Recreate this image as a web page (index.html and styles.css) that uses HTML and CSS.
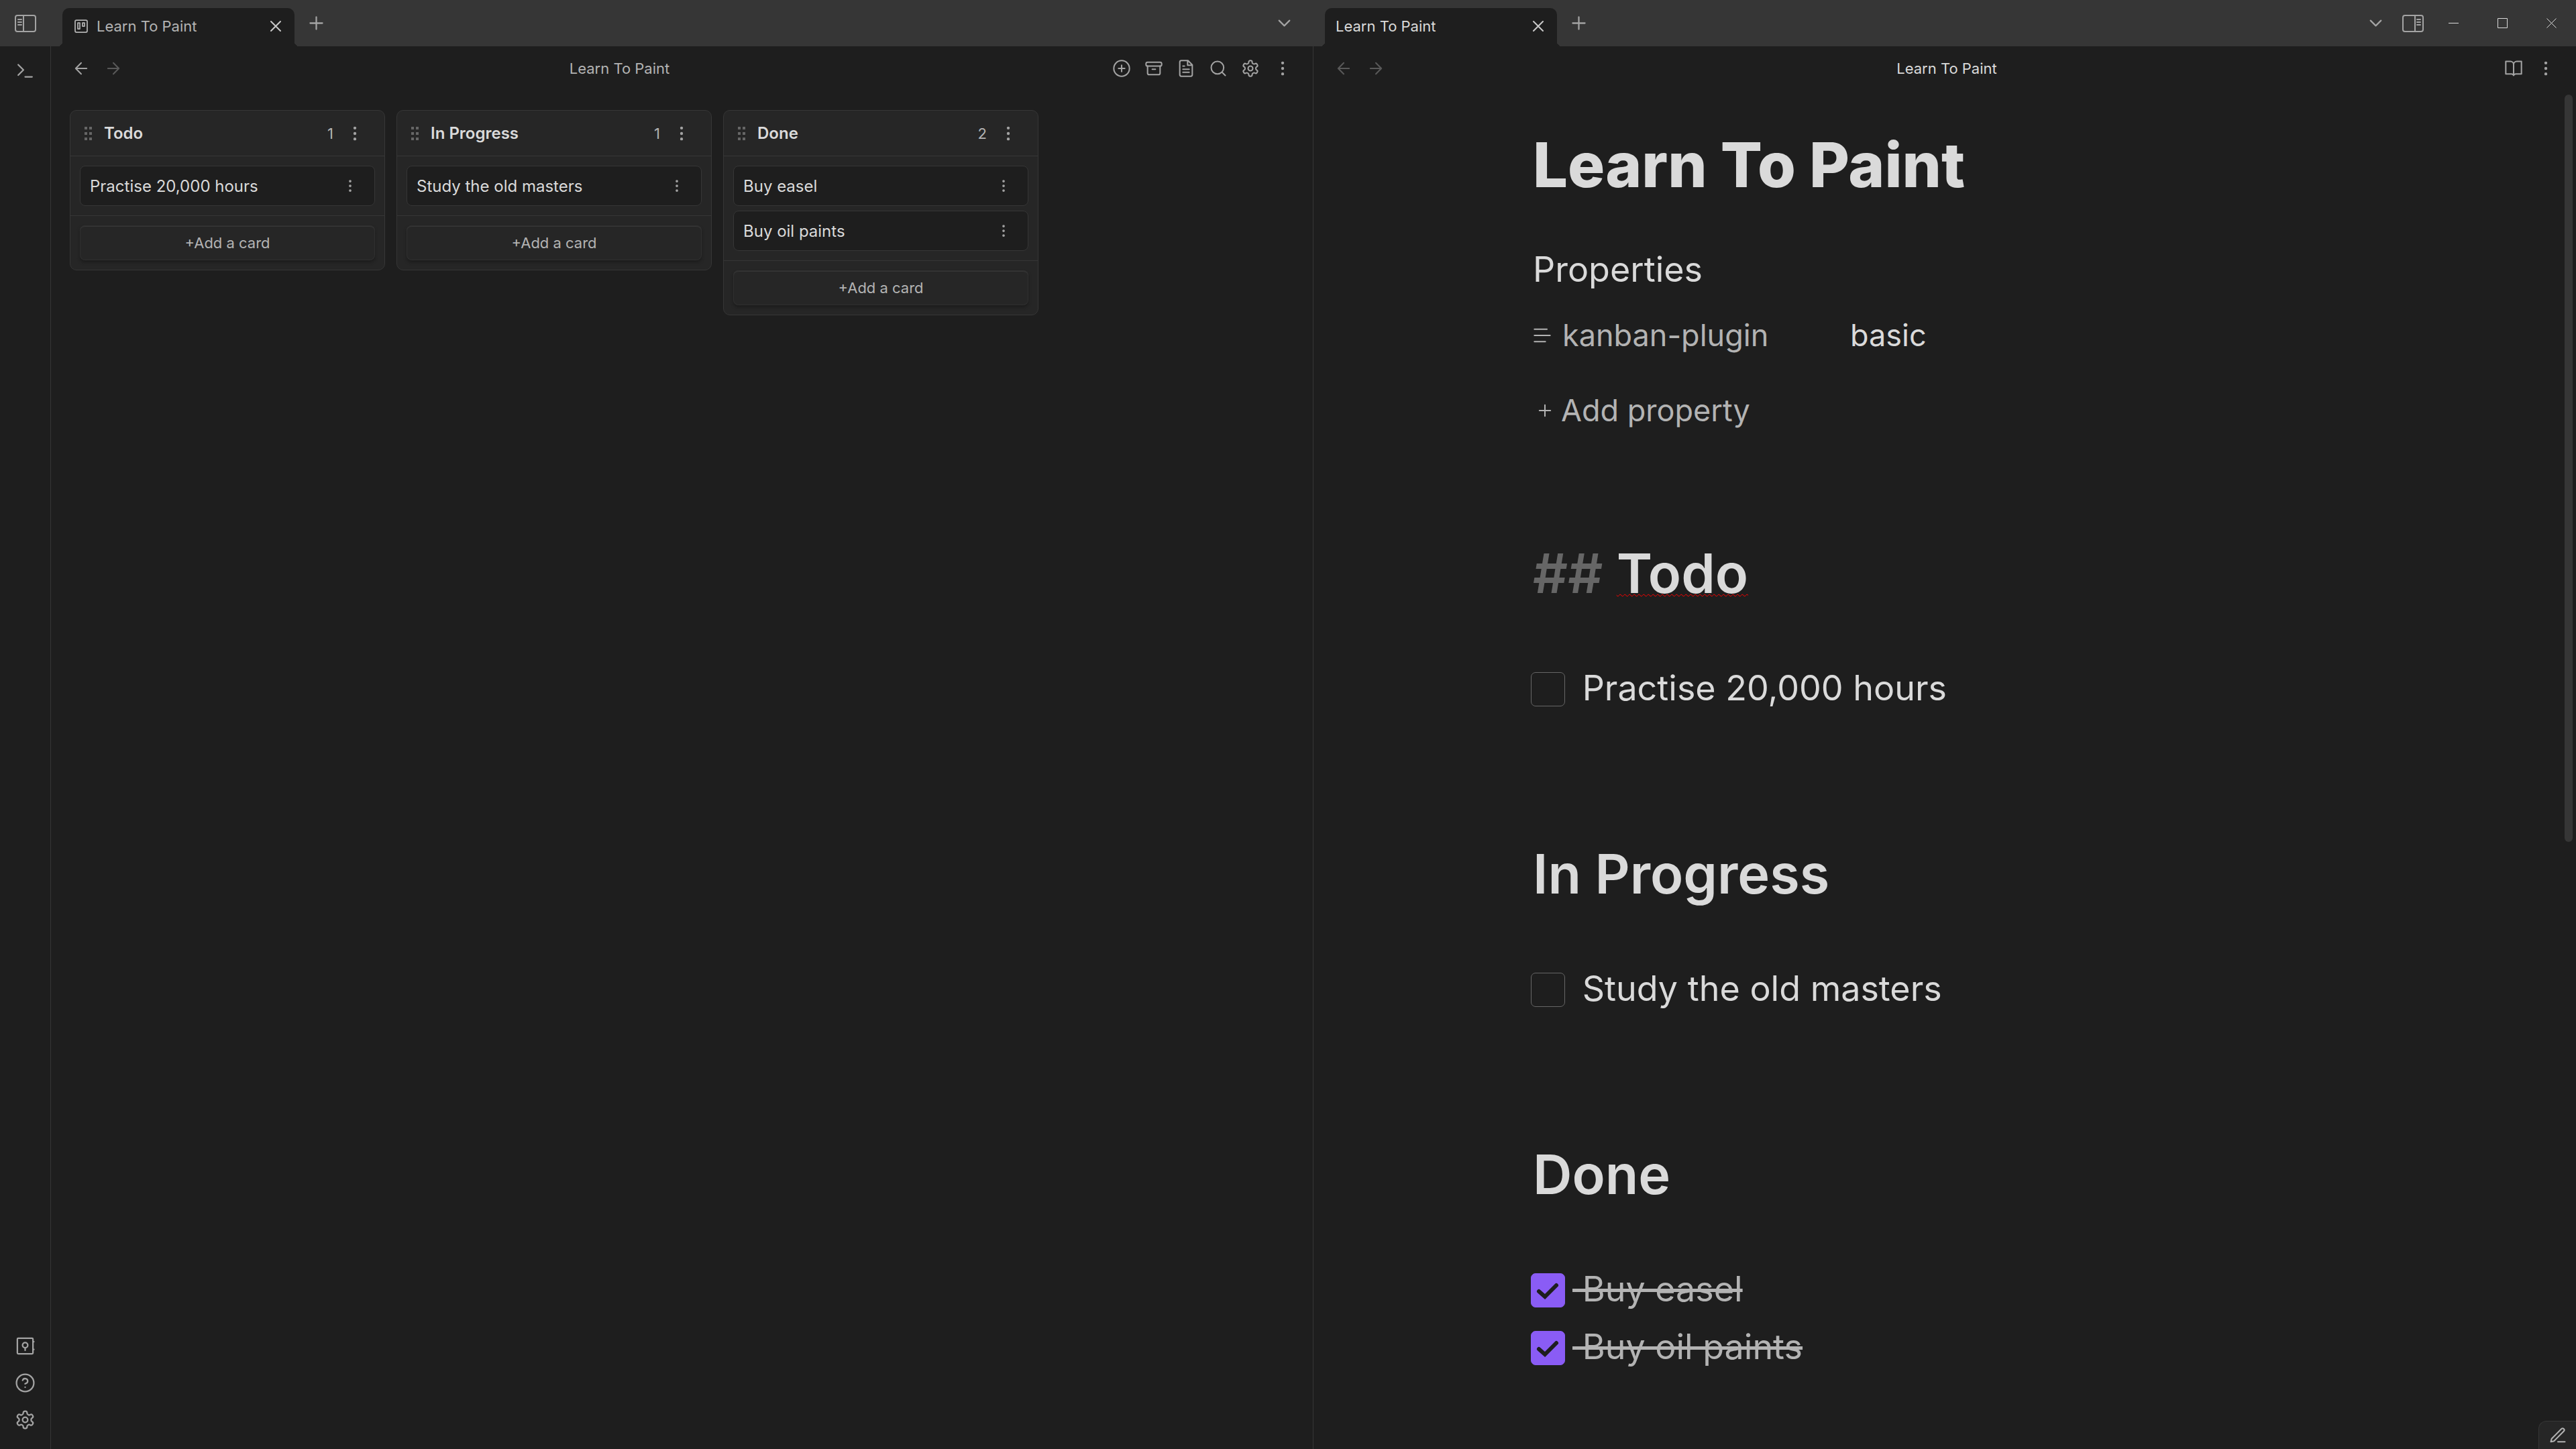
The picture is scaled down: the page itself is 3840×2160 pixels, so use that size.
FILE: index.html
```html
<!DOCTYPE html>
<html lang="en">
<head>
<meta charset="utf-8">
<title>Learn To Paint</title>
<link rel="stylesheet" href="styles.css">
</head>
<body>
<svg class="sprite" aria-hidden="true">
  <symbol id="i-plus" viewBox="0 0 24 24"><path d="M5 12h14M12 5v14"/></symbol>
  <symbol id="i-x" viewBox="0 0 24 24"><path d="M18 6 6 18M6 6l12 12"/></symbol>
  <symbol id="i-down" viewBox="0 0 24 24"><path d="m6 9 6 6 6-6"/></symbol>
  <symbol id="i-left" viewBox="0 0 24 24"><path d="m12 19-7-7 7-7M19 12H5"/></symbol>
  <symbol id="i-right" viewBox="0 0 24 24"><path d="M5 12h14M12 5l7 7-7 7"/></symbol>
  <symbol id="i-dots" viewBox="0 0 24 24"><circle cx="12" cy="5" r="1"/><circle cx="12" cy="12" r="1"/><circle cx="12" cy="19" r="1"/></symbol>
  <symbol id="i-gear" viewBox="0 0 24 24"><path d="M12.22 2h-.44a2 2 0 0 0-2 2v.18a2 2 0 0 1-1 1.73l-.43.25a2 2 0 0 1-2 0l-.15-.08a2 2 0 0 0-2.73.73l-.22.38a2 2 0 0 0 .73 2.73l.15.1a2 2 0 0 1 1 1.72v.51a2 2 0 0 1-1 1.74l-.15.09a2 2 0 0 0-.73 2.73l.22.38a2 2 0 0 0 2.73.73l.15-.08a2 2 0 0 1 2 0l.43.25a2 2 0 0 1 1 1.73V20a2 2 0 0 0 2 2h.44a2 2 0 0 0 2-2v-.18a2 2 0 0 1 1-1.73l.43-.25a2 2 0 0 1 2 0l.15.08a2 2 0 0 0 2.73-.73l.22-.39a2 2 0 0 0-.73-2.73l-.15-.08a2 2 0 0 1-1-1.74v-.5a2 2 0 0 1 1-1.74l.15-.09a2 2 0 0 0 .73-2.73l-.22-.38a2 2 0 0 0-2.73-.73l-.15.08a2 2 0 0 1-2 0l-.43-.25a2 2 0 0 1-1-1.73V4a2 2 0 0 0-2-2z"/><circle cx="12" cy="12" r="3"/></symbol>
  <symbol id="i-grip" viewBox="0 0 14 22"><path d="M1 1h4v4H1zM8 1h4v4H8zM1 9h4v4H1zM8 9h4v4H8zM1 17h4v4H1zM8 17h4v4H8z"/></symbol>
  <symbol id="i-side" viewBox="0 0 32 26"><rect x="1" y="1" width="30" height="24" rx="3"/><path d="M13 1v24M5 7h5M5 11h5M5 15h5"/></symbol>
</svg>
<div class="app">
  <div class="corner">
    <button class="btn" aria-label="Collapse sidebar"><svg class="side-icon"><use href="#i-side"/></svg></button>
  </div>
  <div class="tabs">
    <div class="tab tab-quiet">
      <svg class="icon icon-tab" viewBox="0 0 24 24"><rect x="3" y="3" width="18" height="18" rx="2"/><path d="M7 7h3v9H7zM14 7h3v5h-3z"/></svg>
      <span class="tab-title">Learn To Paint</span>
      <button class="btn" aria-label="Close"><svg class="icon"><use href="#i-x"/></svg></button>
    </div>
    <button class="btn tab-new" aria-label="New tab"><svg class="icon icon-l"><use href="#i-plus"/></svg></button>
    <button class="btn tab-list" aria-label="Tab list"><svg class="icon icon-l"><use href="#i-down"/></svg></button>
  </div>
  <div class="tabs tabs-end">
    <div class="tab">
      <span class="tab-title">Learn To Paint</span>
      <button class="btn" aria-label="Close"><svg class="icon"><use href="#i-x"/></svg></button>
    </div>
    <button class="btn tab-new" aria-label="New tab"><svg class="icon icon-l"><use href="#i-plus"/></svg></button>
    <button class="btn tab-list" aria-label="Tab list"><svg class="icon icon-l"><use href="#i-down"/></svg></button>
    <button class="btn side-right" aria-label="Expand sidebar"><svg class="side-icon flip"><use href="#i-side"/></svg></button>
    <button class="btn win" aria-label="Minimize"><svg class="win-icon" viewBox="0 0 15 15"><path d="M0 7.5h15"/></svg></button>
    <button class="btn win" aria-label="Maximize"><svg class="win-icon" viewBox="0 0 15 15"><path d="M.5.5h14v14H.5z"/></svg></button>
    <button class="btn win" aria-label="Close window"><svg class="win-icon" viewBox="0 0 15 15"><path d="M.5.5l14 14M14.5.5l-14 14"/></svg></button>
  </div>

  <nav class="ribbon">
    <button class="btn" aria-label="Command palette"><svg class="icon icon-l" viewBox="0 0 24 24"><path d="m4 17 6-6-6-6M12 19h8"/></svg></button>
    <div class="ribbon-foot">
      <button class="btn" aria-label="Open another vault"><svg class="icon icon-l" viewBox="0 0 24 24"><rect x="3" y="3" width="18" height="18" rx="1"/><circle cx="12" cy="11" r="3"/><path d="M12 14v3M21 7h1M21 16h1"/></svg></button>
      <button class="btn" aria-label="Help"><svg class="icon icon-l" viewBox="0 0 24 24"><circle cx="12" cy="12" r="10"/><path d="M9.090 9a3 3 0 0 1 5.830 1c0 2-3 3-3 3M12 17h.01"/></svg></button>
      <button class="btn" aria-label="Settings"><svg class="icon icon-l"><use href="#i-gear"/></svg></button>
    </div>
  </nav>

  <section class="leaf leaf-board">
    <header class="view-header">
      <button class="btn" aria-label="Back"><svg class="icon"><use href="#i-left"/></svg></button>
      <button class="btn" aria-label="Forward" disabled><svg class="icon"><use href="#i-right"/></svg></button>
      <div class="view-title muted">Learn To Paint</div>
      <button class="btn" aria-label="Add a list"><svg class="icon" viewBox="0 0 24 24"><circle cx="12" cy="12" r="10"/><path d="M8 12h8M12 8v8"/></svg></button>
      <button class="btn" aria-label="Archive completed cards"><svg class="icon" viewBox="0 0 24 24"><rect x="2" y="4" width="20" height="5" rx="2"/><path d="M4 9v9a2 2 0 0 0 2 2h12a2 2 0 0 0 2-2V9M10 13h4"/></svg></button>
      <button class="btn" aria-label="Open as markdown"><svg class="icon" viewBox="0 0 24 24"><path d="M14.500 2H6a2 2 0 0 0-2 2v16a2 2 0 0 0 2 2h12a2 2 0 0 0 2-2V7.500zM14 2v6h6M10 9H8M16 13H8M16 17H8"/></svg></button>
      <button class="btn" aria-label="Search"><svg class="icon" viewBox="0 0 24 24"><circle cx="11" cy="11" r="8"/><path d="m21 21-4.300-4.300"/></svg></button>
      <button class="btn" aria-label="Board settings"><svg class="icon"><use href="#i-gear"/></svg></button>
      <button class="btn" aria-label="More options"><svg class="icon"><use href="#i-dots"/></svg></button>
    </header>
    <div class="board">
      <section class="lane">
        <header class="lane-head"><svg class="grip"><use href="#i-grip"/></svg><h2 class="lane-title">Todo</h2><span class="count">1</span><button class="btn" aria-label="More options"><svg class="icon"><use href="#i-dots"/></svg></button></header>
        <div class="cards">
          <article class="card"><span>Practise 20,000 hours</span><button class="btn" aria-label="Card options"><svg class="icon icon-s"><use href="#i-dots"/></svg></button></article>
        </div>
        <footer class="lane-foot"><button class="add-card">+Add a card</button></footer>
      </section>
      <section class="lane">
        <header class="lane-head"><svg class="grip"><use href="#i-grip"/></svg><h2 class="lane-title">In Progress</h2><span class="count">1</span><button class="btn" aria-label="More options"><svg class="icon"><use href="#i-dots"/></svg></button></header>
        <div class="cards">
          <article class="card"><span>Study the old masters</span><button class="btn" aria-label="Card options"><svg class="icon icon-s"><use href="#i-dots"/></svg></button></article>
        </div>
        <footer class="lane-foot"><button class="add-card">+Add a card</button></footer>
      </section>
      <section class="lane">
        <header class="lane-head"><svg class="grip"><use href="#i-grip"/></svg><h2 class="lane-title">Done</h2><span class="count">2</span><button class="btn" aria-label="More options"><svg class="icon"><use href="#i-dots"/></svg></button></header>
        <div class="cards">
          <article class="card"><span>Buy easel</span><button class="btn" aria-label="Card options"><svg class="icon icon-s"><use href="#i-dots"/></svg></button></article>
          <article class="card"><span>Buy oil paints</span><button class="btn" aria-label="Card options"><svg class="icon icon-s"><use href="#i-dots"/></svg></button></article>
        </div>
        <footer class="lane-foot"><button class="add-card">+Add a card</button></footer>
      </section>
    </div>
  </section>

  <section class="leaf">
    <header class="view-header">
      <button class="btn" aria-label="Back" disabled><svg class="icon"><use href="#i-left"/></svg></button>
      <button class="btn" aria-label="Forward" disabled><svg class="icon"><use href="#i-right"/></svg></button>
      <div class="view-title">Learn To Paint</div>
      <button class="btn" aria-label="Reading view"><svg class="icon" viewBox="0 0 24 24"><path d="M2 3h6a4 4 0 0 1 4 4v14a3 3 0 0 0-3-2H2zM22 3h-6a4 4 0 0 0-4 4v14a3 3 0 0 1 3-2h7z"/></svg></button>
      <button class="btn" aria-label="More options"><svg class="icon"><use href="#i-dots"/></svg></button>
    </header>
    <div class="scroller">
      <article class="note">
        <h1 class="note-title">Learn To Paint</h1>
        <div class="props-title">Properties</div>
        <div class="prop">
          <label class="prop-key" for="kanban-plugin"><svg class="icon prop-icon" viewBox="0 0 24 24"><path d="M2 4h16M2 12h20M2 20h14"/></svg>kanban-plugin</label>
          <input class="prop-value" id="kanban-plugin" type="text" value="basic" spellcheck="false">
        </div>
        <button class="add-prop"><svg class="icon"><use href="#i-plus"/></svg>Add property</button>
        <section class="block">
          <h2><span class="mark">## </span><span class="misspelt">Todo</span></h2>
          <label class="task"><input type="checkbox"><span> Practise 20,000 hours</span></label>
        </section>
        <section class="block">
          <h2>In Progress</h2>
          <label class="task"><input type="checkbox"><span> Study the old masters</span></label>
        </section>
        <section class="block">
          <h2>Done</h2>
          <label class="task done"><input type="checkbox" checked><span> Buy easel</span></label>
          <label class="task done"><input type="checkbox" checked><span> Buy oil paints</span></label>
        </section>
      </article>
      <div class="thumb"></div>
    </div>
    <button class="btn status" aria-label="Editing mode"><svg class="icon" viewBox="0 0 24 24"><path d="M12 20h9M16.500 3.500a2.120 2.120 0 0 1 3 3L7 19l-4 1 1-4z"/></svg></button>
  </section>
</div>
</body>
</html>
```
FILE: styles.css
```css
* { box-sizing: border-box; }

:root {
  --bg: #1e1e1e;
  --bg-alt: #262626;
  --bar: #363636;
  --line: #363636;
  --text: #dadada;
  --muted: #b3b3b3;
  --icon: #a3a3a3;
  --faint: #666;
  --accent: #8a5cf5;
}

body {
  margin: 0;
  background: var(--bg);
  color: var(--text);
  font-family: Inter, "Liberation Sans", sans-serif;
  font-size: 22px;
}

h1, h2 { margin: 0; }

button, input {
  margin: 0;
  padding: 0;
  border: 0;
  background: none;
  color: inherit;
  font: inherit;
}

.sprite { display: none; }

.app {
  display: grid;
  grid-template-columns: 76px 1fr 1fr;
  grid-template-rows: 69px 1fr;
  min-height: 100vh;
}

/* Icons */
.icon, .side-icon {
  width: 28px;
  height: 28px;
  flex: none;
  fill: none;
  stroke: currentColor;
  stroke-width: 1.75px;
  stroke-linecap: round;
  stroke-linejoin: round;
}
.icon-s { width: 24px; height: 24px; }
.icon-tab { width: 24px; height: 24px; }
.icon-l { width: 31px; height: 31px; }
.side-icon { width: 32px; height: 26px; stroke-width: 2px; }
.flip { transform: scaleX(-1); }
.win-icon { width: 15px; height: 15px; fill: none; stroke: #dadada; }
.grip { width: 14px; height: 22px; fill: var(--faint); }

.btn {
  display: flex;
  flex: none;
  align-items: center;
  justify-content: center;
  color: var(--icon);
}
.btn:disabled { color: #595959; }

/* Title bar */
.corner {
  display: flex;
  align-items: center;
  justify-content: center;
  background: var(--bar);
}
.tabs {
  display: flex;
  align-items: center;
  padding: 0 27px 0 17px;
  background: var(--bar);
}
.tabs-end { padding-right: 0; }
.tab {
  position: relative;
  display: flex;
  align-self: flex-end;
  align-items: center;
  gap: 11px;
  width: 346px;
  height: 57px;
  padding: 0 14px 3px 16px;
  border-radius: 10px 10px 0 0;
  background: var(--bg);
}
.tab::before, .tab::after {
  content: "";
  position: absolute;
  bottom: 0;
  width: 7px;
  height: 7px;
}
.tab::before { left: -7px; background: radial-gradient(circle at 0 0, transparent 7px, var(--bg) 7px); }
.tab::after { right: -7px; background: radial-gradient(circle at 100% 0, transparent 7px, var(--bg) 7px); }
.tab-title { flex: 1; }
.tab-quiet { color: var(--muted); }
.tab .btn { color: #c8c8c8; }
.tab-new { width: 34px; margin-left: 15px; }
.tab-list { width: 34px; margin-left: auto; }
.side-right { width: 49px; margin-left: 14px; }
.win { width: 73px; align-self: stretch; }

/* Ribbon */
.ribbon {
  display: flex;
  flex-direction: column;
  justify-content: space-between;
  padding: 21px 0 28px;
  border-right: 1px solid var(--line);
}
.ribbon .btn { width: 75px; }
.ribbon-foot { display: grid; gap: 24px; }

/* Panes */
.leaf {
  position: relative;
  display: flex;
  flex-direction: column;
  min-width: 0;
}
.leaf-board { border-right: 1px solid var(--line); }
.view-header {
  display: flex;
  align-items: center;
  height: 66px;
  padding: 0 21px;
}
.view-header .btn { width: 48px; height: 48px; }
.view-title { flex: 1; padding-left: 6px; text-align: center; }
.muted { color: var(--muted); }

/* Board */
.board {
  display: flex;
  align-items: flex-start;
  gap: 17px;
  padding: 29px 28px;
}
.lane {
  width: 470px;
  border: 1px solid var(--line);
  border-radius: 10px;
  background: var(--bg-alt);
}
.lane-head {
  display: flex;
  align-items: center;
  height: 68px;
  padding: 0 30px 0 20px;
  border-bottom: 1px solid var(--line);
}
.lane-title {
  flex: 1;
  margin-left: 16px;
  font-size: 24px;
  font-weight: 600;
}
.count { margin-right: 18px; color: var(--muted); }
.cards { display: grid; gap: 7px; padding: 14px; }
.card {
  display: flex;
  align-items: center;
  justify-content: space-between;
  height: 60px;
  padding: 0 24px 0 14px;
  border: 1px solid var(--line);
  border-radius: 8px;
  background: var(--bg);
  font-size: 24px;
}
.lane-foot { padding: 14px; border-top: 1px solid var(--line); }
.add-card {
  display: block;
  width: 100%;
  height: 52px;
  border-radius: 8px;
  box-shadow: inset 0 0 0 1px #303030, inset 0 2px 0 #363636, 0 3px 4px #1c1c1c;
  color: var(--muted);
}

/* Note */
.scroller { position: relative; flex: 1; padding: 54px 18px 80px 0; }
.note { max-width: 1210px; margin: 0 auto; }
.note-title { font-size: 92px; font-weight: 800; line-height: 114px; }
.props-title { margin-top: 65px; font-size: 52px; line-height: 68px; }
.prop {
  display: flex;
  align-items: center;
  margin-top: 33px;
  font-size: 45px;
  line-height: 62px;
}
.prop-key {
  display: flex;
  align-items: center;
  gap: 16px;
  width: 473px;
  color: var(--muted);
}
.prop-value { flex: 1; min-width: 0; height: 62px; }
.add-prop {
  display: flex;
  align-items: center;
  gap: 10px;
  margin-top: 50px;
  padding-left: 4px;
  color: var(--muted);
  font-size: 45px;
  line-height: 62px;
}
.block { margin-top: 185px; }
.add-prop + .block { margin-top: 163px; }
.block h2 {
  margin-bottom: 79px;
  font-size: 81px;
  font-weight: 600;
  line-height: 98px;
}
.mark { color: var(--faint); }
.misspelt { text-decoration: underline wavy 1px red; }
.task {
  display: flex;
  align-items: center;
  gap: 11px;
  margin-left: -3px;
  font-size: 52px;
  line-height: 86px;
  white-space: pre;
}
.task input {
  appearance: none;
  flex: none;
  width: 51px;
  height: 51px;
  margin-top: 2px;
  border: 1px solid var(--faint);
  border-radius: 7px;
}
.task input:checked {
  border-color: var(--accent);
  background: var(--accent) url("data:image/svg+xml,%3Csvg xmlns='http://www.w3.org/2000/svg' viewBox='0 0 51 51'%3E%3Cpath d='M12 27l9 8 17-17' fill='none' stroke='%231e1e1e' stroke-width='6' stroke-linecap='round'/%3E%3C/svg%3E") center / 51px;
}
.done { color: var(--muted); }
.done span { text-decoration: line-through; }

.thumb {
  position: absolute;
  top: 6px;
  right: 5px;
  width: 12px;
  height: 55%;
  border-radius: 6px;
  background: #363636;
}
.status {
  position: absolute;
  right: 0;
  bottom: 0;
  width: 56px;
  height: 42px;
  border: solid var(--line);
  border-width: 1px 0 0 1px;
  border-radius: 12px 0 0;
  background: var(--bg-alt);
  color: var(--muted);
}
```
